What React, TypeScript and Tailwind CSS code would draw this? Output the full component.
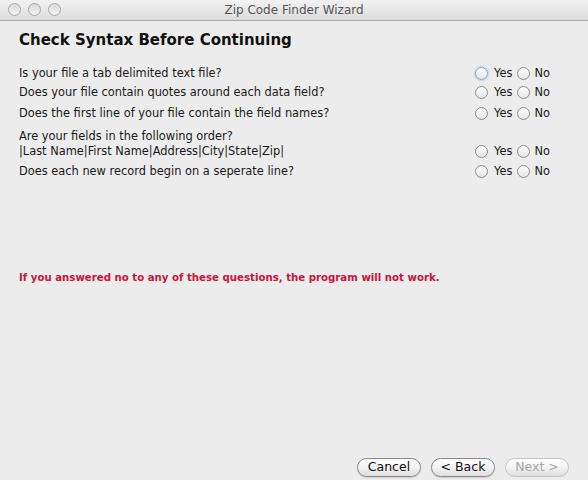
import React from "react";

const questions = [
  { lines: ["Is your file a tab delimited text file?"], mt: "mt-0", focus: true },
  { lines: ["Does your file contain quotes around each data field?"], mt: "mt-[4px]" },
  { lines: ["Does the first line of your file contain the field names?"], mt: "mt-[6px]" },
  {
    lines: ["Are your fields in the following order?", "|Last Name|First Name|Address|City|State|Zip|"],
    mt: "mt-[8px]",
  },
  { lines: ["Does each new record begin on a seperate line?"], mt: "mt-[5px]" },
];

function Radio({ focus }: { focus?: boolean }) {
  return (
    <span
      className={
        "inline-block w-[13px] h-[13px] rounded-full border bg-gradient-to-b from-white to-[#e4e4e4] " +
        (focus ? "border-[#7fa6c9] shadow-[0_0_2px_1px_#b9d3ea]" : "border-[#8c8c8c]")
      }
    />
  );
}

function PillButton({ label, disabled }: { label: string; disabled?: boolean }) {
  return (
    <button
      className={
        "h-[19px] w-[64px] rounded-full border bg-gradient-to-b from-white via-[#f3f3f3] to-[#dedede] text-[12.5px] leading-none " +
        (disabled ? "border-[#c4c4c4] text-[#a8a8a8]" : "border-[#8a8a8a] text-[#111] shadow-[0_1px_1px_rgba(0,0,0,0.15)]")
      }
    >
      {label}
    </button>
  );
}

export default function App() {
  return (
    <div className="w-[588px] h-[480px] bg-[#ececec] flex flex-col font-['DejaVu_Sans',sans-serif] text-[#1a1a1a]">
      {/* title bar */}
      <div className="relative h-[21px] flex items-center justify-center border-b border-[#a9a9a9] bg-gradient-to-b from-[#f2f2f2] to-[#dcdcdc]">
        <div className="absolute left-[8px] top-[3px] flex gap-[7px]">
          <span className="w-[13px] h-[13px] rounded-full border border-[#a8a8a8] bg-gradient-to-b from-[#d8d8d8] to-[#f4f4f4]" />
          <span className="w-[13px] h-[13px] rounded-full border border-[#a8a8a8] bg-gradient-to-b from-[#d8d8d8] to-[#f4f4f4]" />
          <span className="w-[13px] h-[13px] rounded-full border border-[#a8a8a8] bg-gradient-to-b from-[#d8d8d8] to-[#f4f4f4]" />
        </div>
        <span className="text-[12px] text-[#555]">Zip Code Finder Wizard</span>
      </div>

      <div className="flex-1 flex flex-col px-[19px]">
        <h1 className="mt-[9px] text-[15px] font-bold leading-[20px] text-[#111]">Check Syntax Before Continuing</h1>

        <div className="mt-[16px] flex flex-col text-[11.4px]">
          {questions.map((q, i) => (
            <div key={i} className={"flex items-end justify-between " + q.mt}>
              <div className="flex flex-col leading-[15px]">
                {q.lines.map((l) => (
                  <span key={l}>{l}</span>
                ))}
              </div>
              <div className="flex items-center mr-[19px] leading-[15px]">
                <Radio focus={q.focus} />
                <span className="ml-[6px] mr-[4px]">Yes</span>
                <Radio />
                <span className="ml-[5px]">No</span>
              </div>
            </div>
          ))}
        </div>

        <p className="mt-[91px] text-[10.2px] font-bold text-[#c8143c]">
          If you answered no to any of these questions, the program will not work.
        </p>

        <div className="mt-auto mb-[3px] flex justify-end gap-[10px]">
          <PillButton label="Cancel" />
          <PillButton label="< Back" />
          <PillButton label="Next >" disabled />
        </div>
      </div>
    </div>
  );
}
